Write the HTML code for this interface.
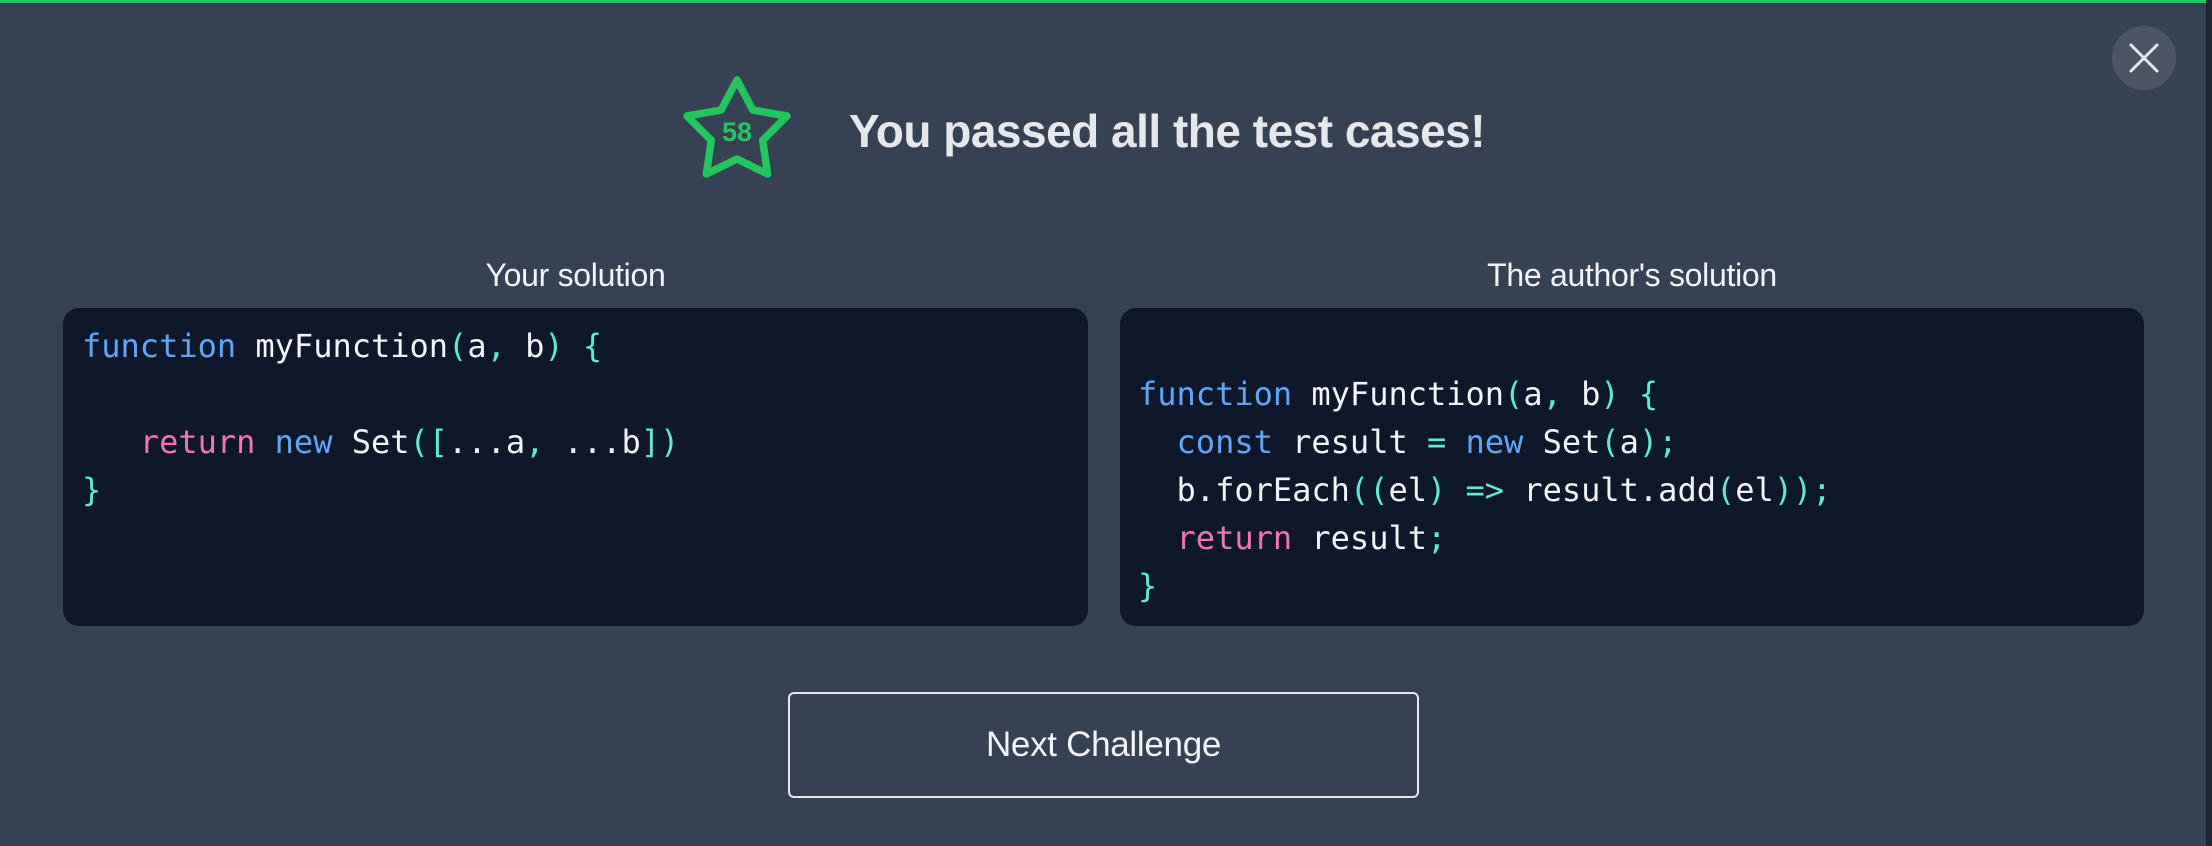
<!DOCTYPE html>
<html><head><meta charset="utf-8"><style>
*{margin:0;padding:0;box-sizing:border-box}
body{width:2212px;height:846px;background:#364153;position:relative;overflow:hidden;font-family:"Liberation Sans",sans-serif}
.top{position:absolute;left:0;top:0;width:2206px;height:3px;background:#22c55e}
.edge{position:absolute;right:0;top:0;width:6px;height:846px;background:#1f2633}
.title{position:absolute;left:849px;top:104px;font-size:46px;font-weight:bold;color:#e5e7eb;letter-spacing:-0.5px;white-space:nowrap}
.label{position:absolute;top:257px;font-size:32px;color:#f3f4f6;text-align:center;letter-spacing:-0.3px}
.code{position:absolute;top:308px;height:318px;background:#0f172a;border-radius:16px;font-family:"DejaVu Sans Mono","Liberation Mono",monospace;font-size:32px;line-height:48px;color:#f3f4f6;white-space:pre}
.code pre{position:absolute;top:14px;font:inherit;line-height:48px}
.k{color:#60a5fa}.r{color:#f472b6}.p{color:#5eead4}
.btn{position:absolute;left:788px;top:692px;width:631px;height:106px;border:2px solid #e5e7eb;border-radius:6px;color:#f3f4f6;font-size:35px;text-align:center;line-height:102px;letter-spacing:-0.3px}
</style></head><body>
<div class="top"></div><div class="edge"></div>
<svg style="position:absolute;left:2100px;top:14px" width="88" height="88"><circle cx="44" cy="44" r="32" fill="#4b5566"/><path d="M31 31L57 57M57 31L31 57" stroke="#e5e7eb" stroke-width="3" stroke-linecap="round"/></svg>
<svg style="position:absolute;left:667px;top:62px" width="140" height="140" viewBox="-70 -70 140 140"><polygon points="0,-52 15.9,-21.9 50,-16 25.7,8.3 30.6,42 0,27 -30.6,42 -25.7,8.3 -50,-16 -15.9,-21.9" fill="none" stroke="#22c55e" stroke-width="7.5" stroke-linejoin="round"/><text x="0" y="9" text-anchor="middle" font-family="Liberation Sans Narrow,Liberation Sans,sans-serif" font-weight="bold" font-size="27" fill="#22c55e">58</text></svg>
<div class="title">You passed all the test cases!</div>
<div class="label" style="left:63px;width:1025px">Your solution</div>
<div class="label" style="left:1120px;width:1024px">The author's solution</div>
<div class="code" style="left:63px;width:1025px"><pre style="left:19px"><span class="k">function</span> myFunction<span class="p">(</span>a<span class="p">,</span> b<span class="p">)</span> <span class="p">{</span>

   <span class="r">return</span> <span class="k">new</span> Set<span class="p">([</span>...a<span class="p">,</span> ...b<span class="p">])</span>
<span class="p">}</span></pre></div>
<div class="code" style="left:1120px;width:1024px"><pre style="left:18px;top:62px"><span class="k">function</span> myFunction<span class="p">(</span>a<span class="p">,</span> b<span class="p">)</span> <span class="p">{</span>
  <span class="k">const</span> result <span class="p">=</span> <span class="k">new</span> Set<span class="p">(</span>a<span class="p">);</span>
  b.forEach<span class="p">((</span>el<span class="p">)</span> <span class="p">=&gt;</span> result.add<span class="p">(</span>el<span class="p">));</span>
  <span class="r">return</span> result<span class="p">;</span>
<span class="p">}</span></pre></div>
<div class="btn">Next Challenge</div>
</body></html>
